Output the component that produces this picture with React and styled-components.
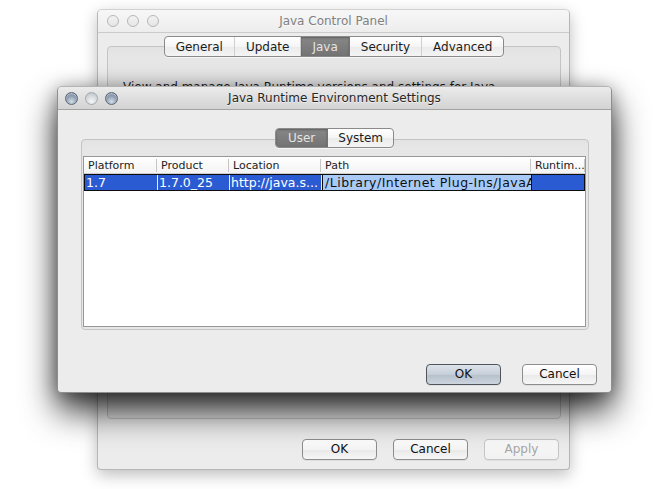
import React from 'react';
import styled, { createGlobalStyle, css } from 'styled-components';

const GlobalStyle = createGlobalStyle`
  html, body { margin: 0; padding: 0; background: #ffffff; }
  body { font-family: "DejaVu Sans", "Liberation Sans", sans-serif; }
`;

const Desktop = styled.div`
  position: relative;
  width: 669px;
  height: 489px;
  overflow: hidden;
  background: #ffffff;
`;

const Window = styled.div`
  position: absolute;
  left: ${p => p.$x}px;
  top: ${p => p.$y}px;
  width: ${p => p.$w}px;
  height: ${p => p.$h}px;
  box-sizing: border-box;
  display: flex;
  flex-direction: column;
  background: #ececec;
  border: 1px solid ${p => (p.$active ? '#8e8e8e' : '#b6b6b6')};
  border-top-color: ${p => (p.$active ? '#b4b4b4' : '#d2d2d2')};
  border-radius: 5px 5px 4px 4px;
  overflow: hidden;
  z-index: ${p => (p.$active ? 2 : 1)};
  box-shadow: ${p =>
    p.$active
      ? '0 18px 34px rgba(0,0,0,0.8), 0 2px 18px rgba(0,0,0,0.32)'
      : '0 5px 16px rgba(0,0,0,0.26)'};
`;

const TitleBar = styled.div`
  flex: none;
  height: 22px;
  display: grid;
  grid-template-columns: 1fr auto 1fr;
  align-items: center;
  padding: 0 ${p => p.$pad}px;
  background: ${p =>
    p.$active
      ? 'linear-gradient(#ebebeb, #d3d3d3)'
      : 'linear-gradient(#f7f7f7, #ededed)'};
  border-bottom: 1px solid ${p => (p.$active ? '#a4a4a4' : '#cbcbcb')};
`;

const Lights = styled.div`
  display: flex;
  gap: ${p => p.$gap}px;
`;

const Light = styled.span`
  width: ${p => p.$size}px;
  height: ${p => p.$size}px;
  box-sizing: border-box;
  border-radius: 50%;
  ${p =>
    p.$kind === 'idle'
      ? css`
          border: 1px solid #b7b7b7;
          background: linear-gradient(#f2f2f2, #e6e6e6);
        `
      : p.$kind === 'dim'
      ? css`
          border: 1px solid #a3a9b0;
          background: radial-gradient(circle at 50% 75%, #f4f6f8 0%, #d4d8dc 55%, #b9bec4 100%);
        `
      : css`
          border: 1px solid #5c6878;
          background: radial-gradient(circle at 50% 78%, #d2dce6 0%, #93a3b5 50%, #6e7e92 100%);
          box-shadow: inset 0 1px 1px rgba(255, 255, 255, 0.5);
        `}
`;

const Title = styled.div`
  font-size: 12px;
  color: ${p => (p.$active ? '#262626' : '#808080')};
  text-shadow: 0 1px 0 rgba(255, 255, 255, 0.6);
  white-space: nowrap;
`;

const Body = styled.div`
  flex: 1;
  min-height: 0;
  display: flex;
  flex-direction: column;
  padding: ${p => p.$pad};
`;

const Segmented = styled.div`
  align-self: center;
  position: relative;
  z-index: 1;
  display: flex;
  height: ${p => p.$h}px;
  box-sizing: border-box;
  border: 1px solid #8a8a8a;
  border-radius: 4px;
  overflow: hidden;
  background: linear-gradient(#ffffff, #f5f5f5 50%, #ebebeb 51%, #f4f4f4);
  box-shadow: 0 1px 0 rgba(255, 255, 255, 0.6);
`;

const Seg = styled.div`
  display: flex;
  align-items: center;
  padding: 0 ${p => p.$pad}px;
  font-size: 12px;
  color: #1c1c1c;
  white-space: nowrap;
  & + & {
    border-left: 1px solid #cfcfcf;
  }
  ${p =>
    p.$selected &&
    css`
      background: linear-gradient(#878787, #737373);
      color: #e4e4e4;
      box-shadow: inset 0 1px 2px rgba(0, 0, 0, 0.3);
    `}
  ${p =>
    p.$afterSelected &&
    css`
      border-left-color: #737373 !important;
    `}
`;

const Panel = styled.div`
  flex: 1;
  min-height: 0;
  display: flex;
  flex-direction: column;
  margin: ${p => p.$margin};
  padding: ${p => p.$pad};
  border: 1px solid #c4c4c4;
  border-radius: 4px;
  background: linear-gradient(#e2e2e2, #e6e6e6 8px);
`;

const PanelText = styled.div`
  font-size: 12px;
  color: #1c1c1c;
  white-space: nowrap;
`;

const ButtonRow = styled.div`
  flex: none;
  display: flex;
  justify-content: flex-end;
  gap: ${p => p.$gap}px;
  margin-top: ${p => p.$top}px;
  padding-right: ${p => p.$right}px;
`;

const Button = styled.button`
  width: 75px;
  height: 21px;
  box-sizing: border-box;
  padding: 0 0 1px;
  font-family: inherit;
  font-size: 12px;
  color: #111111;
  border: 1px solid #8d8d8d;
  border-radius: 4px;
  background: linear-gradient(#ffffff, #f4f4f4 50%, #e9e9e9 51%, #f6f6f6);
  box-shadow: 0 1px 0 rgba(0, 0, 0, 0.06);
  ${p =>
    p.$default &&
    css`
      border-color: #50555c;
      background: linear-gradient(#dde3ea, #c6ced8 50%, #b5c0cc 51%, #ccd4dd);
    `}
  ${p =>
    p.$dim &&
    css`
      color: #a6a6a6;
      border-color: #c6c6c6;
      background: linear-gradient(#fafafa, #f1f1f1);
    `}
`;

const COLS = '73px 72px 92px 210px 1fr';

const Table = styled.div`
  flex: 1;
  min-height: 0;
  display: flex;
  flex-direction: column;
  background: #ffffff;
  border: 1px solid #979797;
`;

const HeaderRow = styled.div`
  flex: none;
  display: grid;
  grid-template-columns: ${COLS};
  height: 17px;
  box-sizing: border-box;
  border-bottom: 1px solid #cdcdcd;
  background: linear-gradient(#ffffff, #f3f3f3);
`;

const HeaderCell = styled.div`
  position: relative;
  display: flex;
  align-items: center;
  padding: 1px 0 0 4px;
  font-size: 11px;
  color: #1d1d1d;
  white-space: nowrap;
  overflow: hidden;
  &::after {
    content: '';
    position: absolute;
    right: 0;
    top: 2px;
    bottom: 1px;
    width: 1px;
    background: #c6c6c6;
  }
`;

const DataRow = styled.div`
  flex: none;
  display: grid;
  grid-template-columns: ${COLS};
  height: 17px;
  box-sizing: border-box;
  border: 1px solid #0d0d0d;
  background: #2b5bd2;
`;

const DataCell = styled.div`
  display: flex;
  align-items: center;
  padding-left: 1px;
  font-size: 12.5px;
  color: #ffffff;
  white-space: nowrap;
  overflow: hidden;
  border-right: 1px solid #e6ecf8;
  &:last-child {
    border-right: none;
  }
  ${p =>
    p.$editing &&
    css`
      background: #a9caf6;
      color: #101010;
      letter-spacing: 0.5px;
      border-left: 1px solid #0d0d0d;
      border-right: 1px solid #0d0d0d;
      padding-left: 2px;
    `}
`;

const Emptiness = styled.div`
  flex: 1;
`;

function TrafficLights({ active }) {
  const size = active ? 13 : 12;
  const gap = active ? 7 : 8;
  return (
    <Lights $gap={gap}>
      <Light $size={size} $kind={active ? 'on' : 'idle'} />
      <Light $size={size} $kind={active ? 'dim' : 'idle'} />
      <Light $size={size} $kind={active ? 'on' : 'idle'} />
    </Lights>
  );
}

function ControlPanel() {
  const tabs = ['General', 'Update', 'Java', 'Security', 'Advanced'];
  return (
    <Window $x={97} $y={9} $w={473} $h={461}>
      <TitleBar $pad={9}>
        <TrafficLights />
        <Title>Java Control Panel</Title>
        <span />
      </TitleBar>
      <Body $pad="3px 8px 9px 9px">
        <Segmented $h={21}>
          {tabs.map((t, i) => (
            <Seg key={t} $pad={11} $selected={t === 'Java'} $afterSelected={tabs[i - 1] === 'Java'}>
              {t}
            </Seg>
          ))}
        </Segmented>
        <Panel $margin="-11px 0 0 0" $pad="33px 15px">
          <PanelText>View and manage Java Runtime versions and settings for Java</PanelText>
        </Panel>
        <ButtonRow $gap={16} $top={20} $right={2}>
          <Button>OK</Button>
          <Button>Cancel</Button>
          <Button $dim disabled>Apply</Button>
        </ButtonRow>
      </Body>
    </Window>
  );
}

function JreSettings() {
  return (
    <Window $x={57} $y={86} $w={555} $h={307} $active>
      <TitleBar $pad={7} $active>
        <TrafficLights active />
        <Title $active>Java Runtime Environment Settings</Title>
        <span />
      </TitleBar>
      <Body $pad="18px 0 7px 0">
        <Segmented $h={20}>
          <Seg $pad={12} $selected>User</Seg>
          <Seg $pad={10} $afterSelected>System</Seg>
        </Segmented>
        <Panel $margin="-9px 22px 0 23px" $pad="16px 2px 2px 1px">
          <Table>
            <HeaderRow>
              <HeaderCell>Platform</HeaderCell>
              <HeaderCell>Product</HeaderCell>
              <HeaderCell>Location</HeaderCell>
              <HeaderCell>Path</HeaderCell>
              <HeaderCell>Runtim...</HeaderCell>
            </HeaderRow>
            <DataRow>
              <DataCell>1.7</DataCell>
              <DataCell>1.7.0_25</DataCell>
              <DataCell>http://java.s...</DataCell>
              <DataCell $editing>/Library/Internet Plug-Ins/JavaAppletPlugin.plugin</DataCell>
              <DataCell />
            </DataRow>
            <Emptiness />
          </Table>
        </Panel>
        <ButtonRow $gap={21} $top={34} $right={14}>
          <Button $default>OK</Button>
          <Button>Cancel</Button>
        </ButtonRow>
      </Body>
    </Window>
  );
}

export default function App() {
  return (
    <>
      <GlobalStyle />
      <Desktop>
        <ControlPanel />
        <JreSettings />
      </Desktop>
    </>
  );
}
